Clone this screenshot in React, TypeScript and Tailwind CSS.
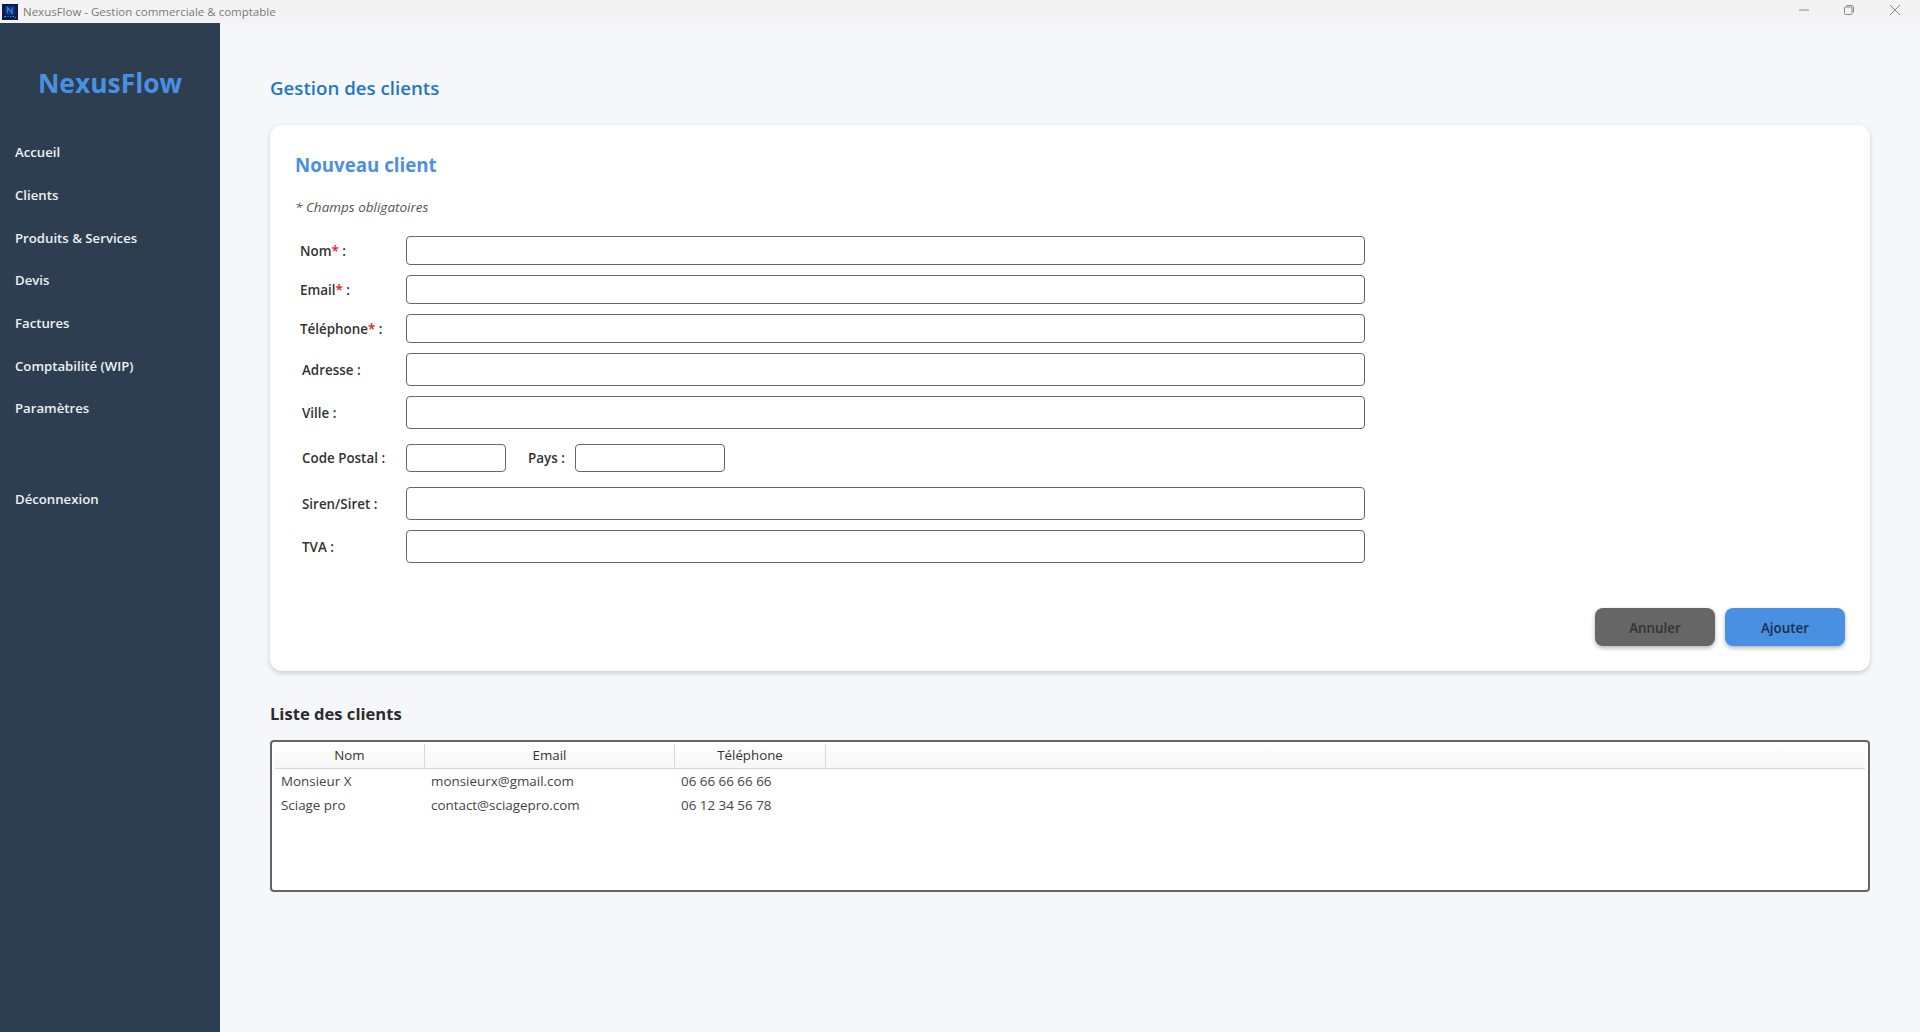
const font = "font-['Open_Sans','Noto_Sans',sans-serif]";

function Field({ label, req, h, mb, indent }: { label: string; req?: boolean; h: string; mb: string; indent?: boolean }) {
  return (
    <div className={`flex items-center ${mb}`}>
      <label className={`w-[111px] shrink-0 pt-[2px] text-[13.4px] font-[550] text-[#333] ${indent ? 'pl-[7px]' : 'pl-[5px]'}`}>
        {label}
        {req && <span className="text-[#e01b24]">*</span>} :
      </label>
      <div className={`w-[959px] ${h} rounded-[4px] border border-[#666] bg-white`} />
    </div>
  );
}

const nav = ['Accueil', 'Clients', 'Produits & Services', 'Devis', 'Factures', 'Comptabilité (WIP)', 'Paramètres'];

export default function App() {
  return (
    <div className={`flex h-[1032px] w-[1920px] flex-col overflow-hidden bg-[#f5f7fa] ${font}`}>
      <header className="flex h-[23px] shrink-0 items-center bg-[#f3f3f3]">
        <svg width="16" height="16" viewBox="0 0 16 16" className="ml-[2px]">
          <rect width="16" height="16" fill="#0b1a4a" />
          <rect x="3" y="2" width="10" height="9" fill="#10307a" />
          <path d="M5.5 9V3.5l4.5 5.5V3.5" stroke="#2f86f0" strokeWidth="1.2" fill="none" />
          <path d="M2 12.5h2M5.5 12.5h1M8 12.5h1M10.5 12.5h1.5M13 13.5h1" stroke="#28a8f0" strokeWidth="1" />
        </svg>
        <span className="ml-[5px] text-[11.5px] text-[#7a7a7a]">NexusFlow - Gestion commerciale &amp; comptable</span>
        <div className="mb-[3px] ml-auto flex items-center">
          <svg width="10" height="10" viewBox="0 0 10 10" className="mr-[35px]"><path d="M0 5h10" stroke="#8a8a8a" /></svg>
          <svg width="10" height="10" viewBox="0 0 10 10" className="mr-[36px]">
            <rect x=".5" y="2" width="7.5" height="7.5" rx="1" fill="none" stroke="#8a8a8a" />
            <path d="M2.5 .6h5.5a1.5 1.5 0 0 1 1.5 1.5V7.5" fill="none" stroke="#8a8a8a" />
          </svg>
          <svg width="10" height="10" viewBox="0 0 10 10" className="mr-[20px]"><path d="M0 0l10 10M10 0L0 10" stroke="#8a8a8a" /></svg>
        </div>
      </header>
      <div className="flex min-h-0 flex-1">
        <aside className="w-[220px] shrink-0 bg-[#2c3e50]">
          <div className="flex h-[108px] items-start justify-center pt-[41px] text-[26.4px] leading-[38px] font-bold text-[#4a90e2]">NexusFlow</div>
          <nav className="flex flex-col">
            {nav.map((n) => (
              <a key={n} className="flex h-[42.67px] items-center pt-[2px] pl-[15px] text-[13.2px] font-semibold text-[#ecf0f1]">{n}</a>
            ))}
            <a className="mt-[48px] flex h-[42.67px] items-center pt-[2px] pl-[15px] text-[13.2px] font-semibold text-[#ecf0f1]">Déconnexion</a>
          </nav>
        </aside>
        <main className="flex-1 px-[50px] pt-[50px]">
          <h1 className="h-[30px] text-[18.7px] leading-[30px] font-semibold text-[#1f78c1]">Gestion des clients</h1>
          <section className="mt-[22px] h-[546px] rounded-[12px] bg-white px-[25px] pt-[25px] shadow-[0_2px_5px_rgba(0,0,0,0.18)]">
            <h2 className="h-[30px] text-[18.7px] leading-[30px] font-bold text-[#4a90e2]">Nouveau client</h2>
            <p className="mt-[17px] h-[20px] text-[13.5px] leading-[20px] text-[#555] italic">* Champs obligatoires</p>
            <div className="mt-[19px]">
              <Field label="Nom" req h="h-[29px]" mb="mb-[10px]" />
              <Field label="Email" req h="h-[29px]" mb="mb-[10px]" />
              <Field label="Téléphone" req h="h-[29px]" mb="mb-[10px]" />
              <Field label="Adresse" indent h="h-[33px]" mb="mb-[10px]" />
              <Field label="Ville" indent h="h-[33px]" mb="mb-[15px]" />
              <div className="mb-[15px] flex items-center">
                <label className="w-[111px] shrink-0 pl-[7px] text-[13.4px] font-[550] text-[#333]">Code Postal :</label>
                <div className="h-[28px] w-[100px] rounded-[4px] border border-[#666] bg-white" />
                <label className="ml-[22px] w-[47px] text-[13.4px] font-[550] text-[#333]">Pays :</label>
                <div className="h-[28px] w-[150px] rounded-[4px] border border-[#666] bg-white" />
              </div>
              <Field label="Siren/Siret" indent h="h-[33px]" mb="mb-[10px]" />
              <Field label="TVA" indent h="h-[33px]" mb="mb-0" />
            </div>
            <div className="mt-[45px] flex justify-end gap-[10px]">
              <button className="h-[38px] w-[120px] rounded-[8px] bg-[#666] pt-[2px] text-[13.4px] font-[550] text-[#333] shadow-[0_2px_4px_rgba(0,0,0,0.3)]">Annuler</button>
              <button className="h-[38px] w-[120px] rounded-[8px] bg-[#4a90e2] pt-[2px] text-[13.4px] font-[550] text-[#1a2e4a] shadow-[0_2px_4px_rgba(0,0,0,0.3)]">Ajouter</button>
            </div>
          </section>
          <h2 className="mt-[29px] h-[28px] text-[16.6px] leading-[28px] font-bold text-[#2b2b2b]">Liste des clients</h2>
          <div className="mt-[12px] h-[152px] rounded-[4px] border-2 border-[#666] bg-white px-[3px] pt-px">
            <div className="flex h-[26px] border-b border-[#d5d5d5] bg-gradient-to-b from-white to-[#f6f6f6] pt-px text-[13.3px] text-[#333]">
              <div className="flex w-[150px] items-center justify-center border-r border-[#d9d9d9]">Nom</div>
              <div className="flex w-[250px] items-center justify-center border-r border-[#d9d9d9]">Email</div>
              <div className="flex w-[151px] items-center justify-center border-r border-[#d9d9d9]">Téléphone</div>
            </div>
            {[
              ['Monsieur X', 'monsieurx@gmail.com', '06 66 66 66 66'],
              ['Sciage pro', 'contact@sciagepro.com', '06 12 34 56 78'],
            ].map((r) => (
              <div key={r[0]} className="flex h-[24px] items-center text-[13.4px] text-[#444]">
                <div className="w-[150px] pl-[6px]">{r[0]}</div>
                <div className="w-[250px] pl-[6px]">{r[1]}</div>
                <div className="w-[151px] pl-[6px]">{r[2]}</div>
              </div>
            ))}
          </div>
        </main>
      </div>
    </div>
  );
}
